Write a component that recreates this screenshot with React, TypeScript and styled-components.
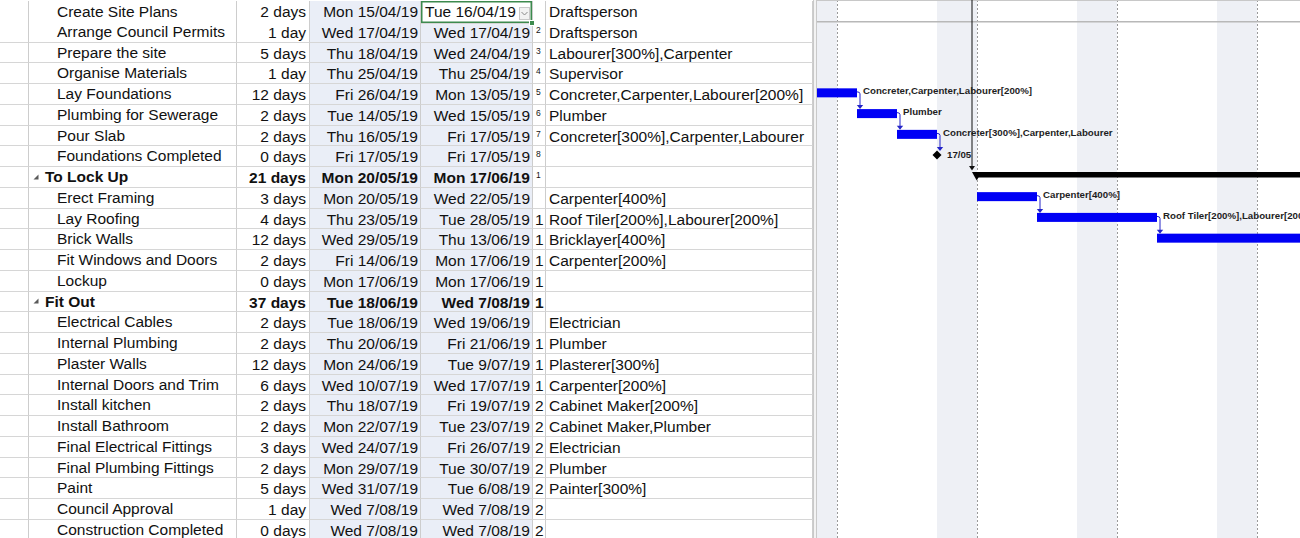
import React from "react";
import styled, { createGlobalStyle, css } from "styled-components";

const ROW_H = 20.76;
const rowTop = (i: number) => 1 + i * ROW_H;
const DAY = 20;
const GANTT_W = 483;

type Task = {
  name: string;
  dur: string;
  start: string;
  finish: string;
  pred?: string;
  predKind?: "sup" | "plain";
  res?: string;
  summary?: boolean;
};

const tasks: Task[] = [
  { name: "Create Site Plans", dur: "2 days", start: "Mon 15/04/19", finish: "Tue 16/04/19", res: "Draftsperson" },
  { name: "Arrange Council Permits", dur: "1 day", start: "Wed 17/04/19", finish: "Wed 17/04/19", pred: "2", predKind: "sup", res: "Draftsperson" },
  { name: "Prepare the site", dur: "5 days", start: "Thu 18/04/19", finish: "Wed 24/04/19", pred: "3", predKind: "sup", res: "Labourer[300%],Carpenter" },
  { name: "Organise Materials", dur: "1 day", start: "Thu 25/04/19", finish: "Thu 25/04/19", pred: "4", predKind: "sup", res: "Supervisor" },
  { name: "Lay Foundations", dur: "12 days", start: "Fri 26/04/19", finish: "Mon 13/05/19", pred: "5", predKind: "sup", res: "Concreter,Carpenter,Labourer[200%]" },
  { name: "Plumbing for Sewerage", dur: "2 days", start: "Tue 14/05/19", finish: "Wed 15/05/19", pred: "6", predKind: "sup", res: "Plumber" },
  { name: "Pour Slab", dur: "2 days", start: "Thu 16/05/19", finish: "Fri 17/05/19", pred: "7", predKind: "sup", res: "Concreter[300%],Carpenter,Labourer" },
  { name: "Foundations Completed", dur: "0 days", start: "Fri 17/05/19", finish: "Fri 17/05/19", pred: "8", predKind: "sup" },
  { name: "To Lock Up", dur: "21 days", start: "Mon 20/05/19", finish: "Mon 17/06/19", pred: "1", predKind: "sup", summary: true },
  { name: "Erect Framing", dur: "3 days", start: "Mon 20/05/19", finish: "Wed 22/05/19", res: "Carpenter[400%]" },
  { name: "Lay Roofing", dur: "4 days", start: "Thu 23/05/19", finish: "Tue 28/05/19", pred: "1", res: "Roof Tiler[200%],Labourer[200%]" },
  { name: "Brick Walls", dur: "12 days", start: "Wed 29/05/19", finish: "Thu 13/06/19", pred: "1", res: "Bricklayer[400%]" },
  { name: "Fit Windows and Doors", dur: "2 days", start: "Fri 14/06/19", finish: "Mon 17/06/19", pred: "1", res: "Carpenter[200%]" },
  { name: "Lockup", dur: "0 days", start: "Mon 17/06/19", finish: "Mon 17/06/19", pred: "1" },
  { name: "Fit Out", dur: "37 days", start: "Tue 18/06/19", finish: "Wed 7/08/19", pred: "1", summary: true },
  { name: "Electrical Cables", dur: "2 days", start: "Tue 18/06/19", finish: "Wed 19/06/19", res: "Electrician" },
  { name: "Internal Plumbing", dur: "2 days", start: "Thu 20/06/19", finish: "Fri 21/06/19", pred: "1", res: "Plumber" },
  { name: "Plaster Walls", dur: "12 days", start: "Mon 24/06/19", finish: "Tue 9/07/19", pred: "1", res: "Plasterer[300%]" },
  { name: "Internal Doors and Trim", dur: "6 days", start: "Wed 10/07/19", finish: "Wed 17/07/19", pred: "1", res: "Carpenter[200%]" },
  { name: "Install kitchen", dur: "2 days", start: "Thu 18/07/19", finish: "Fri 19/07/19", pred: "2", res: "Cabinet Maker[200%]" },
  { name: "Install Bathroom", dur: "2 days", start: "Mon 22/07/19", finish: "Tue 23/07/19", pred: "2", res: "Cabinet Maker,Plumber" },
  { name: "Final Electrical Fittings", dur: "3 days", start: "Wed 24/07/19", finish: "Fri 26/07/19", pred: "2", res: "Electrician" },
  { name: "Final Plumbing Fittings", dur: "2 days", start: "Mon 29/07/19", finish: "Tue 30/07/19", pred: "2", res: "Plumber" },
  { name: "Paint", dur: "5 days", start: "Wed 31/07/19", finish: "Tue 6/08/19", pred: "2", res: "Painter[300%]" },
  { name: "Council Approval", dur: "1 day", start: "Wed 7/08/19", finish: "Wed 7/08/19", pred: "2" },
  { name: "Construction Completed", dur: "0 days", start: "Wed 7/08/19", finish: "Wed 7/08/19", pred: "2" },
];

// gantt: day 0 = Sun 12/05/19, 20px per day
const bars = [
  { row: 4, from: -16, to: 1, label: "Concreter,Carpenter,Labourer[200%]" },
  { row: 5, from: 2, to: 3, label: "Plumber" },
  { row: 6, from: 4, to: 5, label: "Concreter[300%],Carpenter,Labourer" },
  { row: 9, from: 8, to: 10, label: "Carpenter[400%]" },
  { row: 10, from: 11, to: 16, label: "Roof Tiler[200%],Labourer[200%]" },
  { row: 11, from: 17, to: 32, label: "Bricklayer[400%]" },
];

const links = [
  { a: 0, b: 1 },
  { a: 1, b: 2 },
  { a: 3, b: 4 },
  { a: 4, b: 5 },
];

const GlobalStyle = createGlobalStyle`
  html, body {
    margin: 0;
    padding: 0;
    background: #fff;
    overflow: hidden;
  }
  body {
    font-family: "Liberation Sans", Arial, sans-serif;
    color: #111;
  }
`;

const Screen = styled.div`
  display: flex;
  width: 1300px;
  height: 538px;
  overflow: hidden;
  background: #fff;
`;

const Sheet = styled.div`
  display: flex;
  flex-direction: column;
  width: 813px;
  flex: none;
  padding-top: 1px;
`;

const Row = styled.div`
  display: grid;
  grid-template-columns: 29px 208px 73px 111px 112px 13px 267px;
  height: ${ROW_H}px;
  flex: none;
`;

const Cell = styled.div<{ $align?: "left" | "right"; $tint?: boolean; $bold?: boolean }>`
  box-sizing: border-box;
  border-right: 1px solid #cdcdcd;
  border-bottom: 1px solid #d6d6d6;
  font-size: 15.5px;
  line-height: 21.5px;
  white-space: nowrap;
  overflow: hidden;
  text-align: ${(p) => p.$align ?? "left"};
  padding: 0 ${(p) => (p.$align === "right" ? "2px" : "0")} 0 ${(p) => (p.$align === "right" ? "0" : "3px")};
  background: ${(p) => (p.$tint ? "#eaeef7" : "#fff")};
  font-weight: ${(p) => (p.$bold ? 700 : 400)};
`;

const NameCell = styled(Cell)<{ $summary?: boolean }>`
  display: flex;
  align-items: center;
  padding-left: ${(p) => (p.$summary ? "4px" : "28px")};
  gap: 6px;
`;

const DurCell = styled(Cell)`
  padding-right: 3px;
`;

const SelectedCell = styled(Cell)`
  position: relative;
  overflow: visible;
  background: #fff;
  padding-left: 4px;
  box-shadow: inset 0 0 0 1.5px #3d8a4e;
`;

const DropButton = styled.span`
  position: absolute;
  right: 2px;
  top: 6px;
  width: 11px;
  height: 13px;
  box-sizing: border-box;
  border: 1px solid #c9c9c9;
  background: #f2f2f2;
  display: flex;
  align-items: center;
  justify-content: center;
`;

const FillHandle = styled.span`
  position: absolute;
  right: -3px;
  bottom: -3px;
  width: 4px;
  height: 4px;
  background: #3d8a4e;
  border: 1px solid #fff;
`;

const PredCell = styled(Cell)<{ $sup?: boolean }>`
  padding-left: ${(p) => (p.$sup ? "3px" : "2px")};
  ${(p) =>
    p.$sup &&
    css`
      font-size: 8.5px;
      line-height: 10px;
      padding-top: 3px;
    `}
`;

const Splitter = styled.div`
  width: 4px;
  flex: none;
  box-sizing: border-box;
  background: #f3f3f3;
  border-left: 1px solid #c9c9c9;
  border-right: 1px solid #c9c9c9;
`;

const GanttPane = styled.div`
  flex: 1;
  position: relative;
  overflow: hidden;
  background: #fff;
`;

const Toggle = () => (
  <svg width="6" height="6" viewBox="0 0 6 6">
    <polygon points="5.5,0.5 5.5,5.5 0.5,5.5" fill="#5a5a5a" />
  </svg>
);

const TaskRow = ({ t, i }: { t: Task; i: number }) => {
  const b = !!t.summary;
  return (
    <Row>
      <Cell />
      <NameCell $summary={b} $bold={b}>
        {b && <Toggle />}
        {t.name}
      </NameCell>
      <DurCell $align="right" $bold={b}>
        {t.dur}
      </DurCell>
      <Cell $align="right" $tint $bold={b}>
        {t.start}
      </Cell>
      {i === 0 ? (
        <SelectedCell>
          {t.finish}
          <DropButton>
            <svg width="7" height="5" viewBox="0 0 7 5">
              <polyline points="0.5,1 3.5,4 6.5,1" fill="none" stroke="#888" strokeWidth="1" />
            </svg>
          </DropButton>
          <FillHandle />
        </SelectedCell>
      ) : (
        <Cell $align="right" $tint $bold={b}>
          {t.finish}
        </Cell>
      )}
      <PredCell $sup={t.predKind === "sup"} $bold={b && t.predKind !== "sup"}>
        {t.pred ?? ""}
      </PredCell>
      <Cell>{t.res ?? ""}</Cell>
    </Row>
  );
};

const LABEL_FONT = "'Liberation Sans', Arial, sans-serif";

const Gantt = () => {
  const W = GANTT_W;
  const H = 538;
  const barTop = (r: number) => rowTop(r) + 4.3;
  const weekends = [-1, 6, 13, 20, 27];
  const mondays = [1, 8, 15, 22, 29];
  const msX = 6 * DAY;
  const msY = 155;
  return (
    <svg width={W} height={H} viewBox={`0 0 ${W} ${H}`} style={{ display: "block" }}>
      {weekends.map((d) => (
        <rect key={d} x={d * DAY} y={0} width={DAY * 2} height={H} fill="#eef0f5" />
      ))}
      {mondays.map((d) => (
        <line key={d} x1={d * DAY + 0.5} y1={0} x2={d * DAY + 0.5} y2={H} stroke="#9a9a9a" strokeWidth="1" strokeDasharray="2 2" />
      ))}
      <line x1={0} y1={0.5} x2={W} y2={0.5} stroke="#c8c8c8" />
      <line x1={0} y1={21.8} x2={W} y2={21.8} stroke="#b8b8b8" strokeWidth="1.6" />

      {/* link into the To Lock Up summary */}
      <line x1={155} y1={0} x2={155} y2={167} stroke="#111" strokeWidth="1" />
      <polygon points="152,166 158,166 155,170.5" fill="#111" />

      {/* summary bar */}
      <rect x={160} y={172} width={W - 160} height={5.5} fill="#000" />
      <polygon points="155,172 164.5,172 159.7,180.5" fill="#000" />

      {bars.map((b) => {
        const x = Math.max(b.from * DAY, 0);
        const x2 = Math.min((b.to + 1) * DAY, W);
        const y = barTop(b.row);
        const showLabel = (b.to + 1) * DAY + 6 < W;
        return (
          <g key={b.row}>
            <rect x={x} y={y} width={x2 - x} height={9} fill="#0000f5" />
            {showLabel && (
              <text x={(b.to + 1) * DAY + 6} y={y + 5.8} fontFamily={LABEL_FONT} fontWeight="700" fontSize="9.7" fill="#1e1e1e">
                {b.label}
              </text>
            )}
          </g>
        );
      })}

      {links.map(({ a, b }) => {
        const A = bars[a];
        const B = bars[b];
        const ex = (A.to + 1) * DAY;
        const ay = barTop(A.row) + 4.5;
        const by = barTop(B.row);
        const lx = ex + 3;
        return (
          <g key={`${a}-${b}`}>
            <path d={`M${ex} ${ay - 1} q${lx - ex} 0 ${lx - ex} 2 L${lx} ${by - 3}`} fill="none" stroke="#2424c8" strokeWidth="1" />
            <polygon points={`${lx - 3.2},${by - 4} ${lx + 3.2},${by - 4} ${lx},${by}`} fill="#2424c8" />
          </g>
        );
      })}

      {/* Pour Slab -> Foundations Completed */}
      <path d={`M120 ${barTop(6) + 3.5} q3 0 3 2 L123 ${msY - 7}`} fill="none" stroke="#2424c8" strokeWidth="1" />
      <polygon points={`119.8,${msY - 8} 126.2,${msY - 8} 123,${msY - 4}`} fill="#2424c8" />

      {/* milestone */}
      <polygon points={`${msX},${msY - 4.5} ${msX + 4.5},${msY} ${msX},${msY + 4.5} ${msX - 4.5},${msY}`} fill="#000" />
      <text x={msX + 10} y={msY + 3.2} fontFamily={LABEL_FONT} fontWeight="700" fontSize="9.7" fill="#1e1e1e">
        17/05
      </text>
    </svg>
  );
};

export default function App() {
  return (
    <Screen>
      <GlobalStyle />
      <Sheet>
        {tasks.map((t, i) => (
          <TaskRow key={i} t={t} i={i} />
        ))}
      </Sheet>
      <Splitter />
      <GanttPane>
        <Gantt />
      </GanttPane>
    </Screen>
  );
}
